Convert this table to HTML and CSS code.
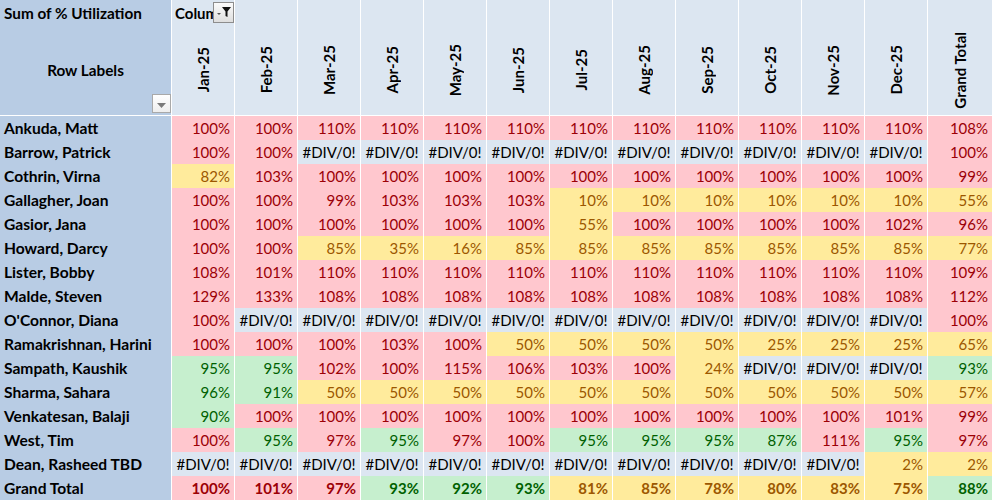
FILE: index.html
```html
<!DOCTYPE html>
<html>
<head>
<meta charset="utf-8">
<link rel="stylesheet" href="styles.css">
</head>
<body>
<div class="sheet">
  <div class="corner">
    <div class="corner-title">Sum of % Utilization</div>
    <div class="corner-label">Row Labels</div>
    <span class="dd-btn"><svg width="9" height="5" viewBox="0 0 9 5"><polygon points="0,0 9,0 4.5,5" fill="#7a7a7a"/></svg></span>
  </div>
  <div class="hd first"><div class="hd-top"><span class="col-labels">Column Labels</span><span class="flt-btn"><svg width="18" height="18" viewBox="0 0 18 18"><polygon points="2,9 6,9 4,11" fill="#555"/><polygon points="7,3 16,3 12.5,7.5 12.5,13 10.5,12 10.5,7.5" fill="#111"/></svg></span></div><div class="hd-lab"><span class="vt">Jan-25</span></div></div>
  <div class="hd"><div class="hd-top"></div><div class="hd-lab"><span class="vt">Feb-25</span></div></div>
  <div class="hd"><div class="hd-top"></div><div class="hd-lab"><span class="vt">Mar-25</span></div></div>
  <div class="hd"><div class="hd-top"></div><div class="hd-lab"><span class="vt">Apr-25</span></div></div>
  <div class="hd"><div class="hd-top"></div><div class="hd-lab"><span class="vt">May-25</span></div></div>
  <div class="hd"><div class="hd-top"></div><div class="hd-lab"><span class="vt">Jun-25</span></div></div>
  <div class="hd"><div class="hd-top"></div><div class="hd-lab"><span class="vt">Jul-25</span></div></div>
  <div class="hd"><div class="hd-top"></div><div class="hd-lab"><span class="vt">Aug-25</span></div></div>
  <div class="hd"><div class="hd-top"></div><div class="hd-lab"><span class="vt">Sep-25</span></div></div>
  <div class="hd"><div class="hd-top"></div><div class="hd-lab"><span class="vt">Oct-25</span></div></div>
  <div class="hd"><div class="hd-top"></div><div class="hd-lab"><span class="vt">Nov-25</span></div></div>
  <div class="hd"><div class="hd-top"></div><div class="hd-lab"><span class="vt">Dec-25</span></div></div>
  <div class="hd last"><div class="hd-top"></div><div class="hd-lab"><span class="vt">Grand Total</span></div></div>

  <div class="nm">Ankuda, Matt</div>
  <div class="c p">100%</div><div class="c p">100%</div><div class="c p">110%</div><div class="c p">110%</div><div class="c p">110%</div><div class="c p">110%</div><div class="c p">110%</div><div class="c p">110%</div><div class="c p">110%</div><div class="c p">110%</div><div class="c p">110%</div><div class="c p">110%</div><div class="c p last">108%</div>

  <div class="nm">Barrow, Patrick</div>
  <div class="c p">100%</div><div class="c p">100%</div><div class="c e">#DIV/0!</div><div class="c e">#DIV/0!</div><div class="c e">#DIV/0!</div><div class="c e">#DIV/0!</div><div class="c e">#DIV/0!</div><div class="c e">#DIV/0!</div><div class="c e">#DIV/0!</div><div class="c e">#DIV/0!</div><div class="c e">#DIV/0!</div><div class="c e">#DIV/0!</div><div class="c p last">100%</div>

  <div class="nm">Cothrin, Virna</div>
  <div class="c y">82%</div><div class="c p">103%</div><div class="c p">100%</div><div class="c p">100%</div><div class="c p">100%</div><div class="c p">100%</div><div class="c p">100%</div><div class="c p">100%</div><div class="c p">100%</div><div class="c p">100%</div><div class="c p">100%</div><div class="c p">100%</div><div class="c p last">99%</div>

  <div class="nm">Gallagher, Joan</div>
  <div class="c p">100%</div><div class="c p">100%</div><div class="c p">99%</div><div class="c p">103%</div><div class="c p">103%</div><div class="c p">103%</div><div class="c y">10%</div><div class="c y">10%</div><div class="c y">10%</div><div class="c y">10%</div><div class="c y">10%</div><div class="c y">10%</div><div class="c y last">55%</div>

  <div class="nm">Gasior, Jana</div>
  <div class="c p">100%</div><div class="c p">100%</div><div class="c p">100%</div><div class="c p">100%</div><div class="c p">100%</div><div class="c p">100%</div><div class="c y">55%</div><div class="c p">100%</div><div class="c p">100%</div><div class="c p">100%</div><div class="c p">100%</div><div class="c p">102%</div><div class="c p last">96%</div>

  <div class="nm">Howard, Darcy</div>
  <div class="c p">100%</div><div class="c p">100%</div><div class="c y">85%</div><div class="c y">35%</div><div class="c y">16%</div><div class="c y">85%</div><div class="c y">85%</div><div class="c y">85%</div><div class="c y">85%</div><div class="c y">85%</div><div class="c y">85%</div><div class="c y">85%</div><div class="c y last">77%</div>

  <div class="nm">Lister, Bobby</div>
  <div class="c p">108%</div><div class="c p">101%</div><div class="c p">110%</div><div class="c p">110%</div><div class="c p">110%</div><div class="c p">110%</div><div class="c p">110%</div><div class="c p">110%</div><div class="c p">110%</div><div class="c p">110%</div><div class="c p">110%</div><div class="c p">110%</div><div class="c p last">109%</div>

  <div class="nm">Malde, Steven</div>
  <div class="c p">129%</div><div class="c p">133%</div><div class="c p">108%</div><div class="c p">108%</div><div class="c p">108%</div><div class="c p">108%</div><div class="c p">108%</div><div class="c p">108%</div><div class="c p">108%</div><div class="c p">108%</div><div class="c p">108%</div><div class="c p">108%</div><div class="c p last">112%</div>

  <div class="nm">O'Connor, Diana</div>
  <div class="c p">100%</div><div class="c e">#DIV/0!</div><div class="c e">#DIV/0!</div><div class="c e">#DIV/0!</div><div class="c e">#DIV/0!</div><div class="c e">#DIV/0!</div><div class="c e">#DIV/0!</div><div class="c e">#DIV/0!</div><div class="c e">#DIV/0!</div><div class="c e">#DIV/0!</div><div class="c e">#DIV/0!</div><div class="c e">#DIV/0!</div><div class="c p last">100%</div>

  <div class="nm">Ramakrishnan, Harini</div>
  <div class="c p">100%</div><div class="c p">100%</div><div class="c p">100%</div><div class="c p">103%</div><div class="c p">100%</div><div class="c y">50%</div><div class="c y">50%</div><div class="c y">50%</div><div class="c y">50%</div><div class="c y">25%</div><div class="c y">25%</div><div class="c y">25%</div><div class="c y last">65%</div>

  <div class="nm">Sampath, Kaushik</div>
  <div class="c g">95%</div><div class="c g">95%</div><div class="c p">102%</div><div class="c p">100%</div><div class="c p">115%</div><div class="c p">106%</div><div class="c p">103%</div><div class="c p">100%</div><div class="c y">24%</div><div class="c e">#DIV/0!</div><div class="c e">#DIV/0!</div><div class="c e">#DIV/0!</div><div class="c g last">93%</div>

  <div class="nm">Sharma, Sahara</div>
  <div class="c g">96%</div><div class="c g">91%</div><div class="c y">50%</div><div class="c y">50%</div><div class="c y">50%</div><div class="c y">50%</div><div class="c y">50%</div><div class="c y">50%</div><div class="c y">50%</div><div class="c y">50%</div><div class="c y">50%</div><div class="c y">50%</div><div class="c y last">57%</div>

  <div class="nm">Venkatesan, Balaji</div>
  <div class="c g">90%</div><div class="c p">100%</div><div class="c p">100%</div><div class="c p">100%</div><div class="c p">100%</div><div class="c p">100%</div><div class="c p">100%</div><div class="c p">100%</div><div class="c p">100%</div><div class="c p">100%</div><div class="c p">100%</div><div class="c p">101%</div><div class="c p last">99%</div>

  <div class="nm">West, Tim</div>
  <div class="c p">100%</div><div class="c g">95%</div><div class="c p">97%</div><div class="c g">95%</div><div class="c p">97%</div><div class="c p">100%</div><div class="c g">95%</div><div class="c g">95%</div><div class="c g">95%</div><div class="c g">87%</div><div class="c p">111%</div><div class="c g">95%</div><div class="c p last">97%</div>

  <div class="nm">Dean, Rasheed TBD</div>
  <div class="c e">#DIV/0!</div><div class="c e">#DIV/0!</div><div class="c e">#DIV/0!</div><div class="c e">#DIV/0!</div><div class="c e">#DIV/0!</div><div class="c e">#DIV/0!</div><div class="c e">#DIV/0!</div><div class="c e">#DIV/0!</div><div class="c e">#DIV/0!</div><div class="c e">#DIV/0!</div><div class="c e">#DIV/0!</div><div class="c y">2%</div><div class="c y last">2%</div>

  <div class="nm">Grand Total</div>
  <div class="c p b">100%</div><div class="c p b">101%</div><div class="c p b">97%</div><div class="c g b">93%</div><div class="c g b">92%</div><div class="c g b">93%</div><div class="c y b">81%</div><div class="c y b">85%</div><div class="c y b">78%</div><div class="c y b">80%</div><div class="c y b">83%</div><div class="c y b">75%</div><div class="c g b last">88%</div>
</div>
</body>
</html>
```
FILE: styles.css
```css
* { box-sizing: border-box; }
html, body { margin: 0; padding: 0; background: #ffffff; }
body { font-family: Lato, "Open Sans", "Liberation Sans", sans-serif; font-size: 15px; color: #000; }

.sheet {
  display: grid;
  grid-template-columns: 172px repeat(12, 63px) 64px;
  grid-template-rows: 116px;
  grid-auto-rows: 24px;
  width: 992px;
  height: 500px;
  overflow: hidden;
}

.corner {
  position: relative;
  background: #b8cce4;
  border-right: 1px solid #ffffff;
  border-bottom: 1px solid #ffffff;
  display: flex;
  flex-direction: column;
  font-weight: 700;
}
.corner-title { height: 27px; line-height: 27px; padding-left: 4px; white-space: nowrap; font-size: 15.3px; }
.corner-label { flex: 1; display: flex; align-items: center; justify-content: center; padding-bottom: 2px; font-size: 15.3px; }
.dd-btn {
  position: absolute;
  right: 0;
  bottom: 2px;
  width: 19px;
  height: 19px;
  background: linear-gradient(#ffffff, #eeeeee);
  border: 1px solid #a9a9a9;
  display: flex;
  align-items: center;
  justify-content: center;
  padding-top: 3px;
}

.hd {
  background: #dce6f1;
  border-right: 1px solid #ffffff;
  border-bottom: 1px solid #ffffff;
  display: flex;
  flex-direction: column;
  font-weight: 700;
}
.hd.last { border-right: 0; }
.hd-top { height: 27px; display: flex; align-items: flex-start; }
.col-labels {
  flex: 1;
  overflow: hidden;
  white-space: nowrap;
  line-height: 27px;
  padding-left: 3px;
}
.flt-btn {
  width: 21px;
  height: 21px;
  margin: 2px 0 0 0;
  background: linear-gradient(#fbfbfb, #dedede);
  border: 1px solid #8d8d8d;
  display: flex;
  align-items: center;
  justify-content: center;
}
.hd-lab { flex: 1; display: flex; align-items: center; justify-content: center; padding-bottom: 2px; }
.vt { writing-mode: vertical-rl; transform: rotate(180deg); white-space: nowrap; }

.nm {
  background: #b8cce4;
  border-right: 1px solid #ffffff;
  font-weight: 700;
  font-size: 15.6px;
  line-height: 24px;
  padding-left: 4px;
  white-space: nowrap;
  overflow: hidden;
}

.c {
  border-right: 1px solid #ffffff;
  line-height: 24px;
  text-align: right;
  padding-right: 4px;
  white-space: nowrap;
}
.c.last { border-right: 0; }
.p { background: #ffc7ce; color: #9c0006; }
.y { background: #ffeb9c; color: #9c5700; }
.g { background: #c6efce; color: #006100; }
.e { background: #dce6f1; color: #000000; text-align: center; padding: 0; overflow: hidden; }
.b { font-weight: 700; }
```
